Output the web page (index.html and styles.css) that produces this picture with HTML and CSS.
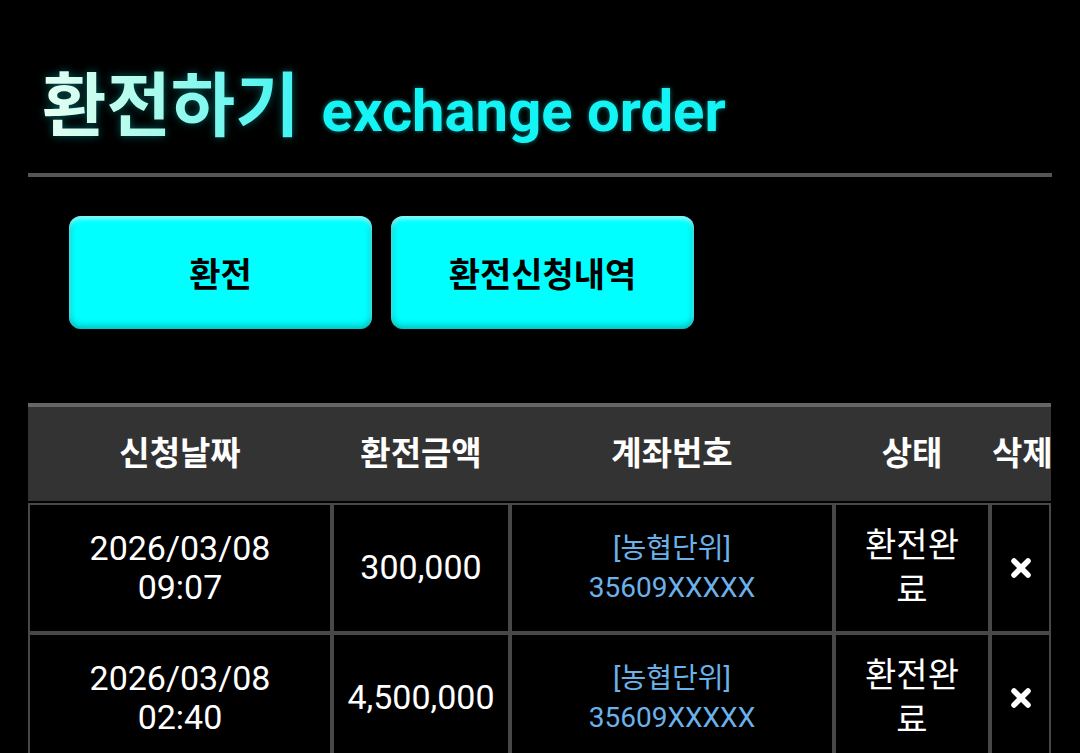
FILE: index.html
```html
<!DOCTYPE html>
<html lang="ko">
<head>
<meta charset="utf-8">
<title>환전하기</title>
<link rel="stylesheet" href="styles.css">
</head>
<body>
<div class="page">
  <h1 class="title">
    <span class="title-ko">환전하기</span>
    <span class="title-en">exchange order</span>
  </h1>
  <div class="tabs">
    <button class="tab">환전</button>
    <button class="tab">환전신청내역</button>
  </div>
  <div class="table-wrap">
    <table class="orders">
      <thead>
        <tr>
          <th class="c-date">신청날짜</th>
          <th class="c-amount">환전금액</th>
          <th class="c-account">계좌번호</th>
          <th class="c-status">상태</th>
          <th class="c-del">삭제</th>
        </tr>
      </thead>
      <tbody>
        <tr>
          <td>2026/03/08<br>09:07</td>
          <td>300,000</td>
          <td class="account">[농협단위]<br>35609XXXXX</td>
          <td class="status">환전완료</td>
          <td class="del"><svg class="x-icon" viewBox="0 0 22 22" aria-hidden="true"><path d="M4 4 L18 18 M18 4 L4 18"/></svg></td>
        </tr>
        <tr>
          <td>2026/03/08<br>02:40</td>
          <td>4,500,000</td>
          <td class="account">[농협단위]<br>35609XXXXX</td>
          <td class="status">환전완료</td>
          <td class="del"><svg class="x-icon" viewBox="0 0 22 22" aria-hidden="true"><path d="M4 4 L18 18 M18 4 L4 18"/></svg></td>
        </tr>
      </tbody>
    </table>
  </div>
</div>
</body>
</html>
```
FILE: styles.css
```css
html, body {
  margin: 0;
  padding: 0;
  background: #000;
}
body {
  font-family: Roboto, "Noto Sans CJK KR", sans-serif;
  color: #fff;
}
.page {
  padding: 0 28px;
  height: 753px;
  overflow: hidden;
}
.title {
  margin: 0;
  padding: 59px 0 26px 14px;
  border-bottom: 4px solid #555;
  display: flex;
  align-items: baseline;
  gap: 22px;
  font-weight: 700;
  line-height: 1.2;
}
.title-ko {
  font-family: "Noto Sans CJK KR", sans-serif;
  font-size: 70px;
  font-weight: 700;
  background: linear-gradient(90deg, #e8fff2 0%, #a6fbec 45%, #3ff3f3 100%);
  -webkit-background-clip: text;
  background-clip: text;
  color: transparent;
  filter: drop-shadow(0 0 4px rgba(0, 255, 255, 0.35));
}
.title-en {
  font-family: Roboto, sans-serif;
  font-size: 58px;
  font-weight: 700;
  color: #14f4f4;
  text-shadow: 0 0 5px rgba(0, 255, 255, 0.45);
}
.tabs {
  display: flex;
  gap: 19px;
  padding-left: 41px;
  margin-top: 39px;
}
.tab {
  width: 303px;
  height: 113px;
  border: none;
  border-radius: 12px;
  background: #00ffff;
  color: #000;
  font-family: "Noto Sans CJK KR", sans-serif;
  font-size: 34px;
  font-weight: 700;
  box-shadow: inset 0 -4px 6px rgba(0, 110, 110, 0.35), inset 0 3px 4px rgba(255, 255, 255, 0.6), inset 3px 0 4px rgba(0, 140, 140, 0.15), inset -3px 0 4px rgba(0, 140, 140, 0.15);
  padding: 0;
}
.table-wrap {
  margin-top: 74px;
  width: 1024px;
  overflow: hidden;
}
.orders {
  width: 1023px;
  table-layout: fixed;
  border-collapse: separate;
  border-spacing: 0;
}
.orders th {
  background: #333;
  border-top: 4px solid #666;
  border-bottom: 2px solid #000;
  padding: 23px 0 24px;
  font-family: Roboto, "Noto Sans CJK KR", sans-serif;
  font-size: 33px;
  font-weight: 700;
  line-height: 47px;
  text-align: center;
  white-space: nowrap;
  box-sizing: border-box;
}
.c-date { width: 304px; }
.c-amount { width: 178px; }
.c-account { width: 324px; }
.c-status { width: 156px; }
.c-del { width: 61px; }
.orders th.c-del { text-align: left; padding-left: 2px; }
.orders td {
  border: 2px solid #484848;
  padding: 18px 12px;
  font-size: 34px;
  line-height: 39px;
  text-align: center;
  vertical-align: middle;
  color: #fff;
}
.orders td.account {
  font-size: 28px;
  line-height: 39px;
  color: #6cb2ea;
}
.orders td.status {
  line-height: 45px;
  padding-left: 20px;
  padding-right: 20px;
  word-break: break-all;
}
.orders td.del {
  padding: 0;
}
.x-icon {
  display: block;
  width: 22px;
  height: 22px;
  margin: 0 auto;
}
.x-icon path {
  stroke: #fff;
  stroke-width: 5.5;
  stroke-linecap: round;
  fill: none;
}
```
